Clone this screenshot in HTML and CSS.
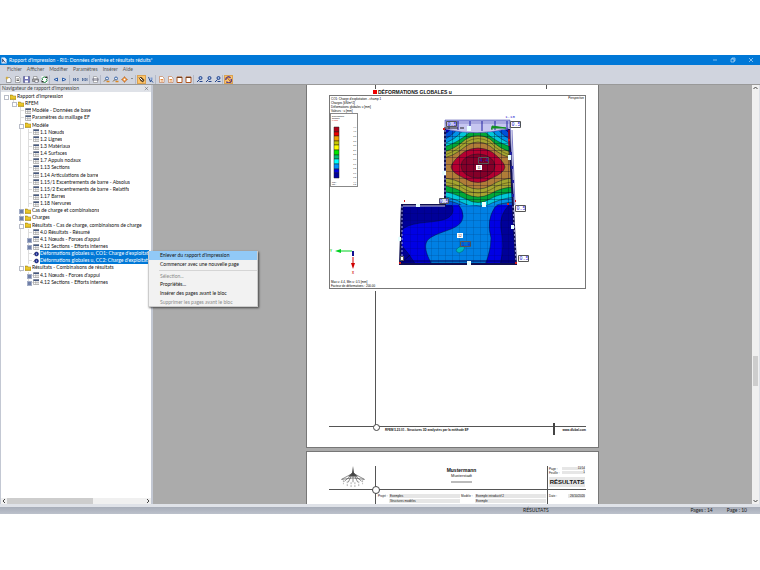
FILE: index.html
```html
<!DOCTYPE html>
<html lang="fr">
    <head>
        <meta charset="UTF-8" />
        <meta name="viewport" content="width=device-width, initial-scale=1.0" />
        <title>Rapport d'impression</title>
        <link rel="stylesheet" href="styles.css">
    </head>

    <body>
        <svg class="sprite" aria-hidden="true">
            <symbol id="i-new" viewBox="0 0 14 14"><path d="M3 3h6l3 3v7H3z" fill="#fff" stroke="#555"/><path d="M4 0l1 3 3 1-3 1-1 3-1-3-3-1 3-1z" fill="#e8b21c"/></symbol>
            <symbol id="i-open" viewBox="0 0 14 14"><path d="M3 1h6l3 3v9H3z" fill="#fff" stroke="#666"/><path d="M5 6h5M5 9h5" stroke="#666" stroke-width="2"/></symbol>
            <symbol id="i-save" viewBox="0 0 14 14"><path d="M1 1h12v12H1z" fill="#7476b8" stroke="#45487d"/><path d="M4 1h6v5H4zM4 9h6v4H4z" fill="#fff"/></symbol>
            <symbol id="i-print" viewBox="0 0 14 14"><path d="M3 1h7v5H3z" fill="#fff" stroke="#666"/><path d="M1 6h12v5H1z" fill="#aaa" stroke="#555"/><path d="M6 8h6v5H6z" fill="#fff" stroke="#556"/></symbol>
            <symbol id="i-refresh" viewBox="0 0 14 14"><path d="M1 0h12v14H1z" fill="#fff"/><path d="M3 8a4 4 0 0 1 7-4M11 6a4 4 0 0 1-7 5" fill="none" stroke="#16803a" stroke-width="2"/><path d="M8 1h5v5zM1 8v5h5z" fill="#111"/></symbol>
            <symbol id="i-prev" viewBox="0 0 14 14"><path d="M11 4v6L4 7z" fill="#dbe8ff" stroke="#2d5ea8" stroke-width="2"/></symbol>
            <symbol id="i-next" viewBox="0 0 14 14"><path d="M3 4v6l7-3z" fill="#dbe8ff" stroke="#2d5ea8" stroke-width="2"/></symbol>
            <symbol id="i-first" viewBox="0 0 14 14"><path d="M3 4v6M7 4L5 7l2 3zM12 4l-2 3 2 3z" fill="#fff" stroke="#3d5c90" stroke-width="1.500"/></symbol>
            <symbol id="i-last" viewBox="0 0 14 14"><path d="M12 4v6M3 4l2 3-2 3zM8 4l2 3-2 3z" fill="#fff" stroke="#3d5c90" stroke-width="1.500"/></symbol>
            <symbol id="i-goto" viewBox="0 0 14 14"><path d="M3 1h6l2 3v9H3z" fill="#fff" stroke="#777"/><path d="M1 5h12v4H1z" fill="#667" /><path d="M3 7h8" stroke="#fff"/></symbol>
            <symbol id="i-zoom" viewBox="0 0 14 14"><circle cx="8" cy="5" r="3" fill="#dce9fa" stroke="#3d67a7" stroke-width="2"/><path d="M6 7l-4 4" stroke="#806030" stroke-width="2"/><path d="M7 11h6" stroke="#e08a20" stroke-width="3"/></symbol>
            <symbol id="i-gear" viewBox="0 0 14 14"><path d="M7 1l2 3 4 3-4 3-2 3-2-3-4-3 4-3z" fill="#f08a28" stroke="#a45b20"/><circle cx="7" cy="7" r="2" fill="#fff"/></symbol>
            <symbol id="i-hand" viewBox="0 0 14 14"><path d="M1 2h6l6 6-3 5-5-3z" fill="#594226"/><path d="M3 3l6 6" stroke="#fff" stroke-width="2"/></symbol>
            <symbol id="i-pick" viewBox="0 0 14 14"><path d="M3 2l4 10 1-4 4 5" fill="#fff" stroke="#2d5396" stroke-width="2"/><path d="M7 3h4v5H7z" fill="#7d9bd0"/></symbol>
            <symbol id="i-page" viewBox="0 0 14 14"><path d="M3 1h6l3 3v9H3z" fill="#fff" stroke="#b55820"/><path d="M5 7h5M5 10h5" stroke="#e68b3c" stroke-width="2"/></symbol>
            <symbol id="i-frame" viewBox="0 0 14 14"><path d="M2 2h10v11H2z" fill="#fff" stroke="#b55820" stroke-width="2"/><path d="M2 3h10" stroke="#704020" stroke-width="2"/></symbol>
            <symbol id="i-link" viewBox="0 0 14 14"><circle cx="9" cy="4" r="3" fill="#9dbbe8" stroke="#24458c" stroke-width="2"/><path d="M7 7l-5 5M7 11h6" stroke="#24458c" stroke-width="2"/></symbol>
            <symbol id="i-sync" viewBox="0 0 14 14"><path d="M2 8a5 5 0 0 1 9-4M12 6a5 5 0 0 1-9 5" fill="none" stroke="#5a3f8c" stroke-width="3"/><path d="M3 2l9 10" stroke="#b76017" stroke-width="2"/></symbol>
            <symbol id="i-folder" viewBox="0 0 12 12"><path d="M0 2h5l1 2h6v7H0z" fill="#e2bc1c" stroke="#8c7412"/><path d="M1 6h10" stroke="#f8e46a" stroke-width="1"/></symbol>
            <symbol id="i-table" viewBox="0 0 12 12"><path d="M1 1h11v10H1z" fill="#fff" stroke="#777"/><path d="M1 1h11v3H1z" fill="#46597f"/><path d="M1 7h11M5 4v7M8 4v7" stroke="#999"/></symbol>
            <symbol id="i-image" viewBox="0 0 12 12"><circle cx="7" cy="6" r="4" fill="#1f2f9c" stroke="#0d174f"/><path d="M0 6h4l-2-2v4z" fill="#555"/><circle cx="7" cy="6" r="1" fill="#fff"/></symbol>
        </svg>

        <div class="app">
            <header class="titlebar">
                <svg class="app-icon" viewBox="0 0 14 14"><path d="M1 0h8l4 4v10H1z" fill="#e9f2ff"/><path d="M4 3v8M4 5l6 7" stroke="#1b2b55" stroke-width="2"/></svg>
                <span>Rapport d'impression - RI1: Données d'entrée et résultats réduits*</span>
                <div class="window-buttons">
                    <button aria-label="Réduire"><svg viewBox="0 0 6 6"><path d="M1 3h4"/></svg></button>
                    <button aria-label="Restaurer"><svg viewBox="0 0 6 6"><path d="M1 2h3v3H1zM2 2V1h3v3H4"/></svg></button>
                    <button aria-label="Fermer"><svg viewBox="0 0 6 6"><path d="M1 1l4 4M5 1L1 5"/></svg></button>
                </div>
            </header>

            <nav class="menubar">
                <button>Fichier</button>
                <button>Afficher</button>
                <button>Modifier</button>
                <button>Paramètres</button>
                <button>Insérer</button>
                <button>Aide</button>
            </nav>

            <div class="toolbar">
                <div class="group">
                    <button aria-label="Nouveau"><svg><use href="#i-new"/></svg></button>
                    <button aria-label="Ouvrir"><svg><use href="#i-open"/></svg></button>
                    <button aria-label="Enregistrer"><svg><use href="#i-save"/></svg></button>
                    <button aria-label="Imprimer"><svg><use href="#i-print"/></svg></button>
                    <button aria-label="Actualiser"><svg><use href="#i-refresh"/></svg></button>
                </div>
                <div class="group">
                    <button aria-label="Page précédente"><svg><use href="#i-prev"/></svg></button>
                    <button aria-label="Page suivante"><svg><use href="#i-next"/></svg></button>
                </div>
                <div class="group">
                    <button aria-label="Première page"><svg><use href="#i-first"/></svg></button>
                    <button aria-label="Dernière page"><svg><use href="#i-last"/></svg></button>
                </div>
                <div class="group">
                    <button aria-label="Aller à la page"><svg><use href="#i-goto"/></svg></button>
                </div>
                <div class="group">
                    <button aria-label="Zoom avant"><svg><use href="#i-zoom"/></svg></button>
                    <button aria-label="Zoom arrière"><svg><use href="#i-zoom"/></svg></button>
                    <button aria-label="Options"><svg><use href="#i-gear"/></svg></button>
                    <button class="drop" aria-label="Plus d'options"></button>
                </div>
                <div class="group">
                    <button class="on" aria-label="Déplacer"><svg><use href="#i-hand"/></svg></button>
                    <button aria-label="Sélectionner"><svg><use href="#i-pick"/></svg></button>
                </div>
                <div class="group">
                    <button aria-label="En-tête"><svg><use href="#i-page"/></svg></button>
                    <button aria-label="Contenu"><svg><use href="#i-page"/></svg></button>
                    <button aria-label="Cadre"><svg><use href="#i-frame"/></svg></button>
                    <button aria-label="Page vide"><svg><use href="#i-frame"/></svg></button>
                </div>
                <div class="group">
                    <button aria-label="Lien 1"><svg><use href="#i-link"/></svg></button>
                    <button aria-label="Lien 2"><svg><use href="#i-link"/></svg></button>
                    <button aria-label="Lien 3"><svg><use href="#i-link"/></svg></button>
                </div>
                <div class="group">
                    <button class="on" aria-label="Synchroniser"><svg><use href="#i-sync"/></svg></button>
                </div>
            </div>

            <div class="content">
                <aside class="navigator">
                    <div class="navigator-title">
                        <span>Navigateur de rapport d'impression</span>
                        <button aria-label="Fermer le navigateur"><svg viewBox="0 0 6 6"><path d="M1 1l4 4M5 1L1 5"/></svg></button>
                    </div>
                    <div class="tree-area">
                        <ul class="tree">
                            <li class="l0 open"><svg><use href="#i-folder"/></svg><span>Rapport d'impression</span></li>
                            <li class="l1 open"><svg><use href="#i-folder"/></svg><span>RFEM</span></li>
                            <li class="l2"><svg><use href="#i-table"/></svg><span>Modèle - Données de base</span></li>
                            <li class="l2"><svg><use href="#i-table"/></svg><span>Paramètres du maillage EF</span></li>
                            <li class="l2 open"><svg><use href="#i-folder"/></svg><span>Modèle</span></li>
                            <li class="l3 in"><svg><use href="#i-table"/></svg><span>1.1 Nœuds</span></li>
                            <li class="l3 in"><svg><use href="#i-table"/></svg><span>1.2 Lignes</span></li>
                            <li class="l3 in"><svg><use href="#i-table"/></svg><span>1.3 Matériaux</span></li>
                            <li class="l3 in"><svg><use href="#i-table"/></svg><span>1.4 Surfaces</span></li>
                            <li class="l3 in"><svg><use href="#i-table"/></svg><span>1.7 Appuis nodaux</span></li>
                            <li class="l3 in"><svg><use href="#i-table"/></svg><span>1.13 Sections</span></li>
                            <li class="l3 in"><svg><use href="#i-table"/></svg><span>1.14 Articulations de barre</span></li>
                            <li class="l3 in"><svg><use href="#i-table"/></svg><span>1.15/1 Excentrements de barre - Absolus</span></li>
                            <li class="l3 in"><svg><use href="#i-table"/></svg><span>1.15/2 Excentrements de barre - Relatifs</span></li>
                            <li class="l3 in"><svg><use href="#i-table"/></svg><span>1.17 Barres</span></li>
                            <li class="l3 in"><svg><use href="#i-table"/></svg><span>1.18 Nervures</span></li>
                            <li class="l2 closed"><svg><use href="#i-folder"/></svg><span>Cas de charge et combinaisons</span></li>
                            <li class="l2 closed"><svg><use href="#i-folder"/></svg><span>Charges</span></li>
                            <li class="l2 open"><svg><use href="#i-folder"/></svg><span>Résultats - Cas de charge, combinaisons de charge</span></li>
                            <li class="l3 in"><svg><use href="#i-table"/></svg><span>4.0 Résultats - Résumé</span></li>
                            <li class="l3 in closed"><svg><use href="#i-table"/></svg><span>4.1 Nœuds - Forces d'appui</span></li>
                            <li class="l3 in closed"><svg><use href="#i-table"/></svg><span>4.12 Sections - Efforts internes</span></li>
                            <li class="l3 in selected"><svg><use href="#i-image"/></svg><span>Déformations globales u, CO1: Charge d'exploitation</span></li>
                            <li class="l3 in selected"><svg><use href="#i-image"/></svg><span>Déformations globales u, CC2: Charge d'exploitation</span></li>
                            <li class="l2 open"><svg><use href="#i-folder"/></svg><span>Résultats - Combinaisons de résultats</span></li>
                            <li class="l3 closed"><svg><use href="#i-table"/></svg><span>4.1 Nœuds - Forces d'appui</span></li>
                            <li class="l3 closed"><svg><use href="#i-table"/></svg><span>4.12 Sections - Efforts internes</span></li>
                        </ul>
                        <div class="context-menu">
                            <button class="active">Enlever du rapport d'impression</button>
                            <button>Commencer avec une nouvelle page</button>
                            <hr>
                            <button disabled>Sélection...</button>
                            <button>Propriétés...</button>
                            <button>Insérer des pages avant le bloc</button>
                            <button disabled>Supprimer les pages avant le bloc</button>
                        </div>
                    </div>
                    <div class="hscroll">
                        <svg viewBox="0 0 6 6"><path d="M4 1L2 3l2 2"/></svg>
                        <div class="track"><div class="thumb"></div></div>
                        <svg viewBox="0 0 6 6"><path d="M2 1l2 2-2 2"/></svg>
                    </div>
                </aside>

                <main class="workspace">
                    <section class="sheet first-sheet">
                        <div class="header-rest"></div>
                        <h1>DÉFORMATIONS GLOBALES u</h1>
                        <svg class="figure" viewBox="329 95 257 194">
                            <defs>
                                <clipPath id="upper"><path d="M445 129Q477 136 509 129L513 205H445z"/></clipPath>
                                <clipPath id="lower"><path d="M401 205H445V190H512L516 264H400z"/></clipPath>
                                <pattern id="mesh" x="445" y="129" width="7" height="7" patternUnits="userSpaceOnUse"><path d="M0 0H7M0 0V7" stroke="#002" stroke-width="1" opacity=".6" fill="none"/></pattern>
                            </defs>
                            <rect x="329.5" y="95.5" width="256" height="193" fill="#fff" stroke="#777"/>
                            <g class="tiny">
                                <text x="331" y="100">CO1: Charge d'exploitation - champ 1</text>
                                <text x="331" y="104">Charges [kN/m^2]</text>
                                <text x="331" y="108">Déformations globales u [mm]</text>
                                <text x="331" y="112">Valeurs : u [mm]</text>
                                <text x="584" y="99" text-anchor="end">Perspective</text>
                                <text x="331" y="283">Max u: 4.4, Min u: 0.5 [mm]</text>
                                <text x="331" y="287">Facteur de déformations : 200.00</text>
                            </g>

                            <!-- legend -->
                            <rect x="330.5" y="113.5" width="27" height="73" fill="#fff" stroke="#888"/>
                            <g class="micro">
                                <text x="332" y="117">Déformations</text>
                                <text x="332" y="119">globales</text>
                                <text x="332" y="121" fill="#c00">u [mm]</text>
                                <g text-anchor="end">
                                    <text x="356" y="128">4.4</text><text x="356" y="132">4.0</text>
                                    <text x="356" y="137">3.7</text><text x="356" y="142">3.3</text>
                                    <text x="356" y="146">3.0</text><text x="356" y="151">2.6</text>
                                    <text x="356" y="155">2.3</text><text x="356" y="160">1.9</text>
                                    <text x="356" y="165">1.6</text><text x="356" y="169">1.2</text>
                                    <text x="356" y="174">0.9</text><text x="356" y="178">0.5</text>
                                    <text x="356" y="183">4.4</text><text x="356" y="185">0.5</text>
                                </g>
                                <text x="332" y="183">Max :</text>
                                <text x="332" y="185">Min :</text>
                            </g>
                            <g stroke="#222" stroke-width=".5">
                                <path fill="#b00018" d="M334 127h5v5h-5z"/><path fill="#f00000" d="M334 132h5v4h-5z"/>
                                <path fill="#f0a000" d="M334 136h5v5h-5z"/><path fill="#c8c800" d="M334 141h5v4h-5z"/>
                                <path fill="#ffff00" d="M334 145h5v5h-5z"/><path fill="#00e800" d="M334 150h5v5h-5z"/>
                                <path fill="#00c070" d="M334 155h5v4h-5z"/><path fill="#00ffff" d="M334 159h5v5h-5z"/>
                                <path fill="#0090ff" d="M334 164h5v5h-5z"/><path fill="#0000e0" d="M334 169h5v4h-5z"/>
                                <path fill="#0000a0" d="M334 173h5v5h-5z"/>
                            </g>

                            <!-- lower slab -->
                            <g clip-path="url(#lower)">
                                <path fill="#000098" d="M400 190h116v75H400z"/>
                                <g stroke="#001040" stroke-width=".5">
                                    <path fill="#0000e4" d="M402 230Q406 225 420 223C438 221 452 221 453 210Q453 204 446 198V190H509V205Q499 215 501 229Q505 246 500 265H416Q408 252 401 245z"/>
                                    <path fill="#0080e4" d="M445 195Q463 204 463 216C462 230 444 229 430 238C421 244 428 257 432 265H485Q491 250 491 238Q486 220 495 207L512 195z"/>
                                    <path fill="#00b8e0" d="M445 190h68L508 196Q492 205 480 206Q458 204 445 195z"/>
                                </g>
                                <path fill="#10f0e0" d="M457 199H504Q480 210 457 199z"/>
                            </g>
                            <!-- upper slab -->
                            <g clip-path="url(#upper)">
                                <path fill="#0000c0" d="M445 128h70v77h-70z"/>
                                <g stroke="#102020" stroke-width=".5">
                                    <path fill="#0050d8" d="M440 136Q448 134 454 125H501Q506 132 515 136V206H440z"/>
                                    <path fill="#0090e8" d="M440 141Q451 138 460 126H495Q504 138 515 141V202Q498 203 490 208H466Q458 202 440 199z"/>
                                    <path fill="#00c8d8" d="M440 145Q455 141 466 127H488Q500 141 515 145V197Q498 199 486 206H470Q456 199 440 195z"/>
                                    <path fill="#00a838" d="M440 148Q457 144 470 132H485Q498 144 515 148V192Q498 194 490 199Q478 206 466 199Q456 194 440 190z"/>
                                    <path fill="#a4a430" d="M440 153Q454 150 466 139Q478 132 490 139Q500 150 515 153V187Q502 187 490 194Q478 200 466 194Q456 187 440 185z"/>
                                    <path fill="#b07c38" d="M440 158Q452 158 466 146Q478 138 490 146Q503 158 515 158V178Q502 178 490 186Q478 192 466 186Q456 178 440 178z"/>
                                    <path fill="#b40030" d="M451 167Q452 161 464 152Q478 144 492 152Q504 161 505 167Q504 173 492 178Q478 187 464 178Q452 173 451 167z"/>
                                    <ellipse fill="#840028" cx="478" cy="166" rx="17" ry="12"/>
                                </g>
                                <g fill="none" stroke="#404010" stroke-width=".5">
                                    <path d="M440 156Q453 154 466 142Q478 135 490 142Q501 154 515 156M440 182Q455 182 466 190Q478 196 490 190Q502 182 515 182"/>
                                </g>
                            </g>
                            <path clip-path="url(#upper)" fill="url(#mesh)" d="M445 129h70v77h-70z"/>
                            <path clip-path="url(#lower)" fill="url(#mesh)" opacity=".4" d="M400 205h117v60H400z"/>

                            <!-- loads and edges -->
                            <path d="M445 120h65v8Q477 137 445 129z" fill="#c6c6f0" stroke="#3030a0" stroke-width=".5"/>
                            <path d="M445 121h65M445 123h65" stroke="#5050b0" stroke-width=".5"/>
                            <path d="M449 121v8M458 121v9M470 121v10M482 121v10M495 121v9M507 121v8" stroke="#2020a0"/>
                            <path d="M510 121l4 84M512 130l3 75" stroke="#8080c8" fill="none"/>
                            <path d="M445 129V205H402L400 264H516L509 129" fill="none" stroke="#101050" stroke-width="2"/>
                            <path d="M403 206h42" stroke="#c0c0e8"/>
                            <path d="M403 261h112M410 255l-9 8" stroke="#000050"/>
                            <path d="M402 206V262M445 130V204M513 206l3 56" stroke="#a0a0e0" stroke-dasharray="2 2"/>
                            <path d="M444 128h14M460 128h4" stroke="#222"/>
                            <path d="M491 128h15l-14-2v4" stroke="#109020" fill="#109020"/>
                            <path d="M509 130v16" stroke="#e00020" stroke-width="1"/>
                            <path d="M508 139h2v2h-2zM404 200h1v2h-1zM515 200h1v2h-1zM399 262h2v2h-2zM515 262h2v2h-2zM443 128h2v2h-2zM507 203h2v2h-2z" fill="#d02020"/>
                            <path d="M510 152h2v3h-2zM511 166h2v3h-2zM512 180h2v3h-2zM512 194h2v3h-2z" fill="#2020a0"/>
                            <g fill="#e8ffff">
                                <path d="M467 126h4v5h-4zM508 155h3v5h-3zM442 171h4v4h-4zM416 204h4v3h-4zM482 202h4v5h-4zM398 237h3v4h-3zM511 225h3v4h-3zM467 261h4v4h-4z"/>
                                <path d="M476 165h6v5h-6zM457 233h6v5h-6z" fill="#fff"/>
                            </g>
                            <path d="M456 250q3-5 9-3q-1 5-6 6q-3-1-3-3z" fill="#00b8b8" stroke="#005070" stroke-width=".5"/>
                            <g fill="#fff" stroke="#555" stroke-width="1">
                                <path d="M510.500 121.500h10v6h-10zM515.500 205.500h10v6h-10zM518.500 255.500h10v6h-10z"/>
                                <path d="M446.500 121.500h10v5h-10z" fill="#c6c6f0"/><path d="M439.500 198.500h9v5h-9z" fill="#dde"/>
                                <path d="M478.500 157.500h10v6h-10z" fill="#760024"/><path d="M460.500 241.500h10v5h-10z" fill="#0070d0"/>
                                <path d="M400.500 256.500h3v4h-3z"/>
                            </g>
                            <g class="value" text-anchor="middle">
                                <text x="516" y="126">0.5</text><text x="521" y="210">0.5</text><text x="524" y="260">0.5</text>
                                <text x="452" y="126">0.5</text><text x="444" y="203">0.5</text><text x="484" y="162">4.4</text>
                                <text x="466" y="246">1.8</text><text class="small" x="510" y="118">1.10</text>
                            </g>
                            <g class="tiny" text-anchor="middle"><text x="479" y="169">11</text><text x="460" y="237">12</text></g>

                            <!-- axes -->
                            <path d="M352 251h-12" stroke="#00d020"/><path d="M335 251l6-2v4z" fill="#00d020"/>
                            <path d="M353 257v7" stroke="#d00000"/><path d="M351 263h4l-2 6z" fill="#d00000"/>
                            <path d="M352 251h2v5h-2z" fill="#101090"/>
                            <g class="tiny axis"><text x="330" y="252" fill="#00d020">Y</text><text x="352" y="274" fill="#d00000">X</text></g>
                        </svg>
                        <div class="margin-line"></div>
                        <footer>
                            <span>RFEM 5.23.01 - Structures 3D analysées par la méthode EF</span>
                            <a href="#">www.dlubal.com</a>
                        </footer>
                    </section>

                    <section class="sheet second-sheet">
                        <div class="logo">
                            <svg viewBox="0 0 26 23">
                                <path d="M13 0l1 7 4 4H8l4-4z" fill="#444"/>
                                <path d="M12 8L1 14M14 8l11 6M12 9L4 16M14 9l8 7M11 11l-3 6M15 11l3 6M13 9v8M1 14q12-3 24 0" fill="none" stroke="#555" stroke-width=".7"/>
                                <path d="M3 15v4M7 16v5M11 17v5M15 17v5M19 16v5M23 15v4" stroke="#aaa" stroke-dasharray="2 1"/>
                            </svg>
                        </div>
                        <div class="company">
                            <strong>Mustermann</strong>
                            <span>Musterstadt</span>
                            <i></i>
                        </div>
                        <div class="page-info">
                            <p>Page : <span>11/14</span></p>
                            <p>Feuille : <span>1</span></p>
                            <strong>RÉSULTATS</strong>
                        </div>
                        <div></div>
                        <div class="project">
                            <span>Projet :</span><b>Exemples</b><span>Modèle :</span><b>Exemple introductif 2</b>
                            <span></span><b>Structures modèles</b><span></span><b>Exemple</b>
                        </div>
                        <div class="date"><p>Date : <span>26/10/2020</span></p></div>
                    </section>
                </main>

                <div class="vscroll">
                    <svg viewBox="0 0 6 6"><path d="M1 4l2-2 2 2"/></svg>
                    <div class="track"><div class="thumb"></div></div>
                    <svg viewBox="0 0 6 6"><path d="M1 2l2 2 2-2"/></svg>
                </div>
            </div>

            <div class="statusbar">
                <span class="section-name">RÉSULTATS</span>
                <span>Pages : 14</span>
                <span>Page : 10</span>
            </div>
        </div>
    </body>
</html>
```
FILE: styles.css
```css
* {
    box-sizing: border-box;
}

body {
    margin: 0;
    padding: 55px 0 56px;
    height: 100vh;
    background: #fff;
    font-family: Lato, 'Open Sans', sans-serif;
    font-size: 5px;
    line-height: 7px;
    color: #111;
}

button {
    font: inherit;
    color: inherit;
    border: 0;
    padding: 0;
    background: none;
}

svg {
    display: block;
}

.sprite {
    position: absolute;
    width: 0;
    height: 0;
}

.app {
    display: flex;
    flex-direction: column;
    height: 100%;
    background: #d0d4de;
}

/* title, menu, toolbar */
.titlebar {
    display: flex;
    align-items: center;
    flex: 0 0 10px;
    background: #0078d7;
    color: #fff;
    padding: 0 1px;
    gap: 2px;
}

.app-icon {
    width: 6px;
    height: 7px;
}

.window-buttons {
    display: flex;
    gap: 12px;
    margin-left: auto;
    padding-right: 5px;
}

.window-buttons svg {
    width: 6px;
    height: 6px;
    fill: none;
    stroke: #fff;
    stroke-width: 0.5;
}

.menubar {
    display: flex;
    align-items: center;
    flex: 0 0 9px;
    gap: 5px;
    padding-left: 7px;
    color: #555;
}

.toolbar {
    display: flex;
    align-items: center;
    flex: 0 0 11px;
    padding-left: 4px;
    border-bottom: 1px solid #999;
}

.group {
    display: flex;
    margin-right: 1px;
    border-right: 1px solid #b4b9c6;
}

.group:last-child {
    border: 0;
}

.group button {
    display: flex;
    align-items: center;
    justify-content: center;
    width: 9px;
    height: 9px;
}

.group svg {
    width: 7px;
    height: 7px;
}

.group .on {
    background: #ffc56a;
    outline: 1px solid #d9a252;
    outline-offset: -1px;
}

.group .drop {
    width: 6px;
}

.drop::before {
    content: '';
    border: 1px solid transparent;
    border-top-color: #444;
}

.content {
    display: flex;
    flex: 1;
    min-height: 0;
}

/* navigator */
.navigator {
    display: flex;
    flex-direction: column;
    flex: 0 0 153px;
    min-width: 0;
    border: solid #c3c8d3;
    border-width: 0 2px 0 1px;
}

.navigator-title {
    display: flex;
    align-items: center;
    justify-content: space-between;
    flex: 0 0 7px;
    padding: 0 2px 0 1px;
    background: #dfe2e8;
    color: #444;
}

.navigator-title svg {
    width: 5px;
    height: 5px;
    fill: none;
    stroke: #444;
    stroke-width: 0.5;
}

.tree-area {
    position: relative;
    flex: 1;
    background: #fff;
}

.tree {
    display: flex;
    flex-direction: column;
    height: 194px;
    margin: 0;
    padding: 1px 2px 0 9px;
    list-style: none;
}

.tree li {
    display: flex;
    align-items: center;
    flex: 1;
    gap: 1px;
    position: relative;
    white-space: nowrap;
    min-width: 0;
}

.tree li > svg {
    flex: 0 0 6px;
    height: 6px;
}

.tree span {
    min-width: 0;
    overflow: hidden;
}

.l1 {
    margin-left: 8px;
}

.l2 {
    margin-left: 15px;
}

.l3 {
    margin-left: 23px;
}

/* connector lines */
.tree li::before {
    content: '';
    position: absolute;
    left: -5px;
    top: 0;
    width: 4px;
    height: 50%;
    border-bottom: 1px solid #ddd;
}

.tree .l1::before,
.tree .l3::before {
    border-left: 1px solid #ddd;
}

.tree .l2::before {
    height: 100%;
    border-bottom: 0;
    background:
        linear-gradient(#ddd, #ddd) 0 0 / 1px 100% no-repeat,
        linear-gradient(#ddd, #ddd) 0 50% / 4px 1px no-repeat;
}

.tree .in::before {
    left: -13px;
    width: 12px;
    height: 100%;
    border-bottom: 0;
    background:
        linear-gradient(#ddd, #ddd) 7px 0 / 1px 100% no-repeat,
        linear-gradient(#ddd, #ddd) 7px 50% / 4px 1px no-repeat;
}

.tree .open::after,
.tree .closed::after {
    content: '';
    position: absolute;
    left: -6px;
    top: 2px;
    width: 3px;
    height: 3px;
    border: 1px solid #b9bdc8;
    background: #fff;
}

.tree .closed::after {
    border-color: #a3adc6;
    background: #6f7fa8;
}

.tree .selected span {
    flex: 1;
    color: #fff;
    background: #0078d7;
}

.context-menu {
    position: absolute;
    left: 147px;
    top: 159px;
    z-index: 2;
    display: flex;
    flex-direction: column;
    width: 110px;
    height: 56px;
    padding: 0 1px;
    background: #f2f2f2;
    box-shadow: inset 0 0 0 1px #ccc, 1px 1px 2px rgba(0, 0, 0, 0.6);
}

.context-menu button {
    flex: 1;
    padding-left: 11px;
    text-align: left;
}

.context-menu .active {
    background: #91c9f7;
}

.context-menu button:disabled {
    color: #8a8a8a;
}

.context-menu hr {
    width: 98px;
    margin: 1px 0 1px auto;
    border: 0;
    border-top: 1px solid #d5d5d5;
}

/* scroll bars */
.hscroll,
.vscroll {
    display: flex;
    background: #f0f0f0;
}

.hscroll {
    flex: 0 0 6px;
}

.vscroll {
    flex: 0 0 8px;
    flex-direction: column;
    border-right: 1px solid #dde0e6;
}

.hscroll svg,
.vscroll svg {
    flex: 0 0 6px;
    height: 6px;
    fill: none;
    stroke: #444;
}

.track {
    flex: 1;
}

.thumb {
    background: #cdcdcd;
}

.hscroll .thumb {
    width: 62%;
    height: 6px;
}

.vscroll .track {
    display: flex;
    flex-direction: column;
}

.vscroll .track::before {
    content: '';
    flex: 0 0 65%;
}

.vscroll .thumb {
    flex: 0 0 30px;
    margin: 0 1px;
}

/* report pages */
.workspace {
    display: flex;
    flex-direction: column;
    align-items: center;
    gap: 5px;
    flex: 1;
    overflow: hidden;
    background: #ababab;
    font-family: 'Liberation Sans', Arial, sans-serif;
}

.sheet {
    width: 291px;
    background: #fff;
    box-shadow: 0 0 0 1px #777;
    padding: 0 12px 0 22px;
}

.first-sheet {
    display: flex;
    flex-direction: column;
    flex: 0 0 362px;
}

.header-rest {
    flex: 0 0 4px;
    margin: 0 39px 0 46px;
    border: solid #555;
    border-width: 0 1px;
}

h1 {
    display: flex;
    align-items: center;
    gap: 1px;
    margin: 0 0 0 44px;
    font-size: 5px;
    line-height: 6px;
}

h1::before {
    content: '';
    width: 4px;
    height: 4px;
    background: #e00;
}

.figure {
    width: 100%;
}

.tiny {
    font-size: 3px;
}

.micro {
    font-size: 2px;
}

.axis {
    font-weight: bold;
}

.value {
    font-family: 'Liberation Mono', monospace;
    font-size: 5px;
    fill: #2020d0;
}

.value .small {
    font-size: 4px;
}

.margin-line {
    position: relative;
    flex: 1;
    margin: 2px 0 0 46px;
    border-left: 1px solid #555;
}

.first-sheet footer {
    display: flex;
    justify-content: space-between;
    position: relative;
    height: 8px;
    margin-bottom: 13px;
    padding-left: 56px;
    border-top: 1px solid #555;
    font-size: 3px;
    font-weight: bold;
}

footer a {
    color: inherit;
    text-decoration: none;
}

/* circle on the crossing of the margin lines */
.first-sheet footer::before,
.logo::after {
    content: '';
    position: absolute;
    width: 5px;
    height: 5px;
    left: 44px;
    top: -3px;
    border: 1px solid #444;
    border-radius: 50%;
    background: #fff;
}

.first-sheet footer::after {
    content: '';
    position: absolute;
    right: 31px;
    top: -4px;
    width: 2px;
    height: 12px;
    background: #444;
}

.second-sheet {
    display: grid;
    grid-template-columns: 46px 1fr 39px;
    grid-template-rows: 24px 1fr;
    flex: 1;
    padding-top: 14px;
    font-size: 3px;
    line-height: 4px;
}

.second-sheet > div:nth-child(-n + 3) {
    border-bottom: 1px solid #555;
}

.logo {
    position: relative;
    padding-left: 11px;
}

.logo svg {
    width: 26px;
    height: 22px;
}

.logo::after {
    width: 6px;
    height: 6px;
    left: 43px;
    top: 20px;
}

.company {
    display: flex;
    flex-direction: column;
    align-items: center;
    border-left: 1px solid #555;
}

.company strong {
    font-size: 5px;
    line-height: 8px;
}

.company span {
    font-size: 4px;
}

.company i {
    width: 21px;
    height: 2px;
    margin-top: 3px;
    background: #bbb;
}

.page-info,
.date {
    border-left: 1px solid #555;
    padding: 1px 1px 0;
}

.page-info p,
.date p {
    display: flex;
    justify-content: space-between;
    margin: 0;
    white-space: nowrap;
}

.page-info p span {
    width: 23px;
    height: 3px;
    line-height: 3px;
    text-align: right;
    background: #e6e6e6;
}

.page-info strong {
    display: block;
    margin-top: 2px;
    font-size: 6px;
    line-height: 10px;
    text-align: center;
    background: #e6e6e6;
}

.project {
    display: grid;
    grid-template-columns: 10px 1fr 13px 1fr;
    grid-auto-rows: 4px;
    gap: 1px;
    align-content: start;
    padding: 4px 1px 0 2px;
    border-left: 1px solid #555;
}

.project b {
    padding-left: 1px;
    font-weight: normal;
    background: #e6e6e6;
}

.date {
    padding-top: 4px;
}

.date span {
    padding-left: 2px;
    background: #e6e6e6;
}

.statusbar {
    display: flex;
    align-items: center;
    justify-content: flex-end;
    gap: 14px;
    flex: 0 0 10px;
    padding: 3px 13px 0 523px;
    background: linear-gradient(#dfe2e8 30%, #a7adb9 30%, #bcc1cb);
    color: #222;
}

.section-name {
    margin-right: auto;
}
```
